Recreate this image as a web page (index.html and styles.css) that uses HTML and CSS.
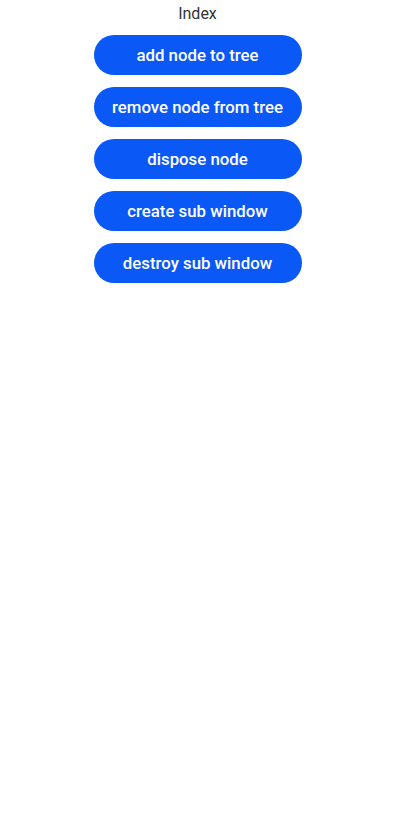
FILE: index.html
```html
<!DOCTYPE html>
<html>
<head>
<meta charset="utf-8">
<link rel="stylesheet" href="styles.css">
</head>
<body>
<div class="page">
  <div class="title">Index</div>
  <div class="buttons">
    <button class="btn">add node to tree</button>
    <button class="btn">remove node from tree</button>
    <button class="btn">dispose node</button>
    <button class="btn">create sub window</button>
    <button class="btn">destroy sub window</button>
  </div>
</div>
</body>
</html>
```
FILE: styles.css
```css
html, body {
  margin: 0;
  padding: 0;
  background: #ffffff;
}
.page {
  width: 395px;
  height: 818px;
  display: flex;
  flex-direction: column;
  align-items: center;
  font-family: Roboto, "Noto Sans", sans-serif;
}
.title {
  padding-top: 3px;
  line-height: 22px;
  font-size: 16px;
  color: #333333;
  height: 22px;
}
.buttons {
  margin-top: 10px;
  display: flex;
  flex-direction: column;
  gap: 12px;
}
.btn {
  width: 208px;
  height: 40px;
  border: none;
  border-radius: 20px;
  background: #0a59f7;
  color: #ffffff;
  font-family: Roboto, "Noto Sans", sans-serif;
  font-size: 16.8px;
  font-weight: 500;
  padding: 0 0 1px 0;
}
```
